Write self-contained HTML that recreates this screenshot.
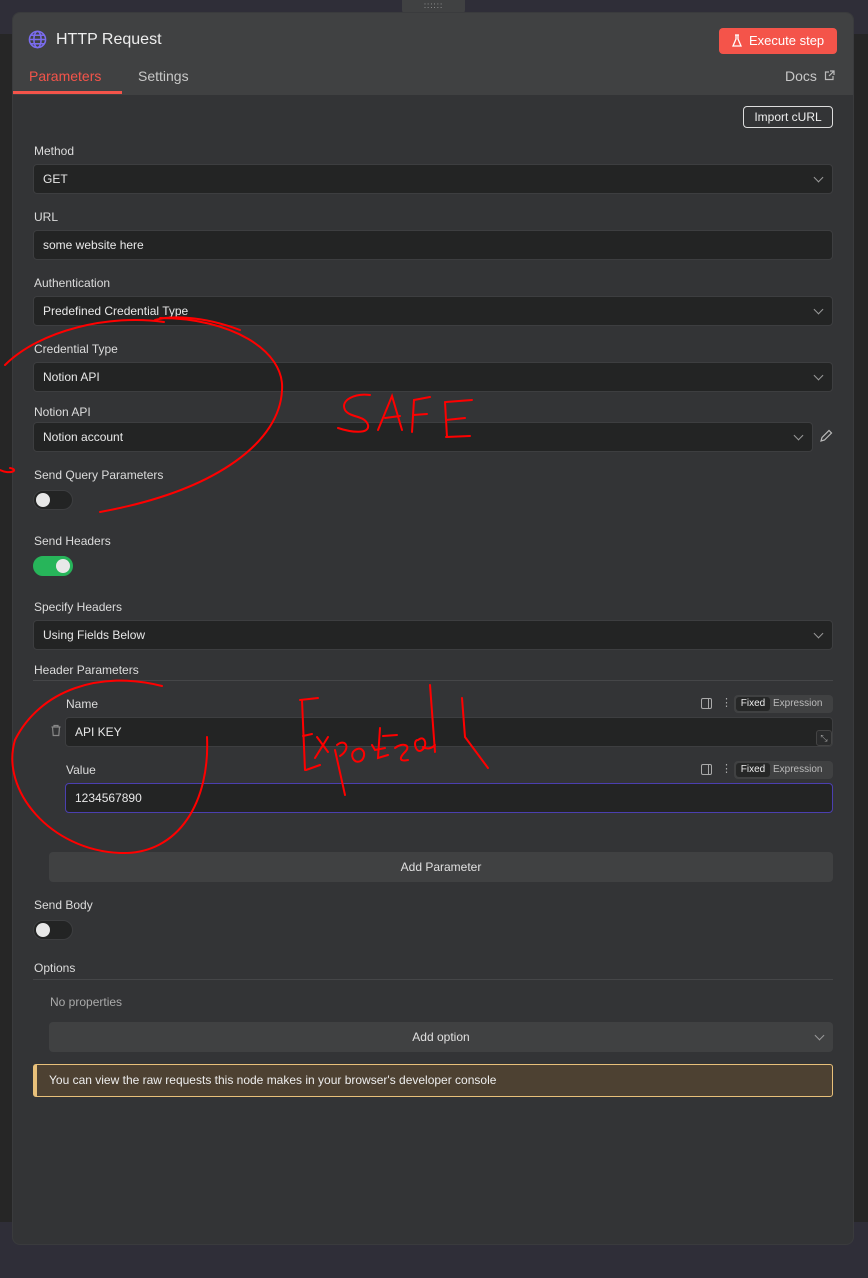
<!DOCTYPE html>
<html><head><meta charset="utf-8"><style>
*{box-sizing:border-box;margin:0;padding:0}
body{width:868px;height:1278px;overflow:hidden;background:#262626;font-family:"Liberation Sans",sans-serif;font-size:12px;color:#e4e4e4;position:relative}
.abs{position:absolute}
.lbl{position:absolute;left:34px;font-size:12px;color:#dcdcdc}
.inp{position:absolute;left:33px;width:800px;height:30px;background:#232424;border:1px solid #3d3e40;border-radius:4px;padding:0 9px;line-height:28px;font-size:12px;color:#e8e8e8}
.chev{position:absolute;right:10px;top:9px;width:7px;height:7px;border-right:1px solid #999;border-bottom:1px solid #999;transform:rotate(45deg)}
.tog{position:absolute;left:33px;width:40px;height:20px;border-radius:10px;background:#232424;border:1px solid #3d3e40}
.tog i{position:absolute;top:2px;left:2px;width:14px;height:14px;border-radius:50%;background:#e8e8e8}
.fx{position:absolute;right:35px;width:99px;height:18px;background:#404142;border-radius:4px;font-size:10px;color:#bbb}
</style></head><body>
<div class="abs" style="left:0;top:0;width:868px;height:34px;background:#2f2e38"></div>
<div class="abs" style="left:0;top:1222px;width:868px;height:56px;background:#2f2e38"></div>
<div class="abs" style="left:402px;top:0;width:63px;height:14px;background:#404142;border-radius:0 0 4px 4px;color:#aaa;font-size:8px;text-align:center;line-height:12px;letter-spacing:1px">::::::</div>
<div class="abs" style="left:12px;top:12px;width:842px;height:1233px;background:#333436;border-radius:8px;border:1px solid #3a3b3d;overflow:hidden">
 <div class="abs" style="left:0;top:0;width:842px;height:82px;background:#404142"></div>
</div>
<svg class="abs" style="left:28px;top:30px" width="19" height="19" viewBox="0 0 20 20" fill="none" stroke="#7b6cf0" stroke-width="1.6"><circle cx="10" cy="10" r="8.5"/><ellipse cx="10" cy="10" rx="3.8" ry="8.5"/><line x1="1.5" y1="10" x2="18.5" y2="10"/><line x1="3" y1="5.5" x2="17" y2="5.5"/><line x1="3" y1="14.5" x2="17" y2="14.5"/></svg>
<div class="abs" style="left:56px;top:31px;font-size:16px;color:#eee">HTTP Request</div>
<div class="abs" style="left:719px;top:28px;width:118px;height:26px;background:#f4544a;border-radius:4px;color:#fff;font-size:13px;line-height:26px;padding-left:30px">Execute step</div>
<svg class="abs" style="left:731px;top:34px" width="12" height="14" viewBox="0 0 12 14" fill="none" stroke="#fff" stroke-width="1.3"><path d="M4 1h4M5 1v4L2 12h8L7 5V1"/></svg>
<div class="abs" style="left:29px;top:68px;font-size:14px;color:#f4544a">Parameters</div>
<div class="abs" style="left:13px;top:91px;width:109px;height:3px;background:#f4544a"></div>
<div class="abs" style="left:138px;top:68px;font-size:14px;color:#c8c8c8">Settings</div>
<div class="abs" style="left:785px;top:68px;font-size:14px;color:#c8c8c8">Docs</div>
<svg class="abs" style="left:824px;top:70px" width="11" height="11" viewBox="0 0 11 11" fill="none" stroke="#bbb" stroke-width="1.2"><path d="M5 2H1.5v7.5H9V6M6 1h4v4M10 1L5 6"/></svg>
<div class="abs" style="left:743px;top:106px;width:90px;height:22px;border:1px solid #ddd;border-radius:4px;color:#eee;font-size:12px;text-align:center;line-height:20px">Import cURL</div>

<div class="lbl" style="top:144px">Method</div>
<div class="inp" style="top:164px">GET<span class="chev"></span></div>
<div class="lbl" style="top:210px">URL</div>
<div class="inp" style="top:230px">some website here</div>
<div class="lbl" style="top:276px">Authentication</div>
<div class="inp" style="top:296px">Predefined Credential Type<span class="chev"></span></div>
<div class="lbl" style="top:342px">Credential Type</div>
<div class="inp" style="top:362px">Notion API<span class="chev"></span></div>
<div class="lbl" style="top:405px">Notion API</div>
<div class="inp" style="top:422px;width:780px">Notion account<span class="chev"></span></div>
<svg class="abs" style="left:819px;top:429px" width="14" height="14" viewBox="0 0 14 14" fill="none" stroke="#bbb" stroke-width="1.2"><path d="M2 12l1-3.5 7-7 2.5 2.5-7 7z"/></svg>
<div class="lbl" style="top:468px">Send Query Parameters</div>
<div class="tog" style="top:490px"><i></i></div>
<div class="lbl" style="top:534px">Send Headers</div>
<div class="tog" style="top:556px;background:#27b55a;border-color:#27b55a"><i style="left:22px"></i></div>
<div class="lbl" style="top:600px">Specify Headers</div>
<div class="inp" style="top:620px">Using Fields Below<span class="chev"></span></div>
<div class="lbl" style="top:663px">Header Parameters</div>
<div class="abs" style="left:33px;top:680px;width:800px;height:1px;background:#454648"></div>

<div class="abs" style="left:66px;top:697px;color:#dcdcdc">Name</div>
<div class="abs" style="left:701px;top:698px;width:11px;height:11px;border:1px solid #aaa;border-radius:2px"><div style="position:absolute;left:6px;top:0;width:1px;height:9px;background:#aaa"></div></div>
<div class="abs" style="left:721px;top:696px;color:#aaa;font-size:11px">⋮</div>
<div class="fx" style="top:695px"><span style="position:absolute;left:2px;top:2px;width:34px;height:14px;background:#262727;border-radius:3px;color:#eee;text-align:center;line-height:14px">Fixed</span><span style="position:absolute;left:39px;top:2px;line-height:14px">Expression</span></div>
<svg class="abs" style="left:50px;top:724px" width="12" height="13" viewBox="0 0 12 13" fill="none" stroke="#888" stroke-width="1.2"><path d="M1.5 3h9M4 3V1.5h4V3M2.5 3l.7 8.5h5.6L9.5 3"/></svg>
<div class="inp" style="left:65px;top:717px;width:768px">API KEY</div>
<div class="abs" style="left:816px;top:730px;width:16px;height:16px;border:1px solid #444;border-radius:3px;background:#2a2b2c;color:#999;font-size:9px;text-align:center;line-height:14px">⤡</div>
<div class="abs" style="left:66px;top:763px;color:#dcdcdc">Value</div>
<div class="abs" style="left:701px;top:764px;width:11px;height:11px;border:1px solid #aaa;border-radius:2px"><div style="position:absolute;left:6px;top:0;width:1px;height:9px;background:#aaa"></div></div>
<div class="abs" style="left:721px;top:762px;color:#aaa;font-size:11px">⋮</div>
<div class="fx" style="top:761px"><span style="position:absolute;left:2px;top:2px;width:34px;height:14px;background:#262727;border-radius:3px;color:#eee;text-align:center;line-height:14px">Fixed</span><span style="position:absolute;left:39px;top:2px;line-height:14px">Expression</span></div>
<div class="inp" style="left:65px;top:783px;width:768px;border-color:#4b3fb0">1234567890</div>

<div class="abs" style="left:49px;top:852px;width:784px;height:30px;background:#404142;border-radius:4px;text-align:center;line-height:30px;color:#e0e0e0">Add Parameter</div>
<div class="lbl" style="top:898px">Send Body</div>
<div class="tog" style="top:920px"><i></i></div>
<div class="lbl" style="top:961px">Options</div>
<div class="abs" style="left:33px;top:979px;width:800px;height:1px;background:#454648"></div>
<div class="abs" style="left:50px;top:995px;color:#aaa">No properties</div>
<div class="abs" style="left:49px;top:1022px;width:784px;height:30px;background:#404142;border-radius:4px;text-align:center;line-height:30px;color:#e0e0e0">Add option<span class="chev" style="top:10px"></span></div>
<div class="abs" style="left:33px;top:1064px;width:800px;height:33px;background:#4d4132;border:1px solid #e8c07a;border-left:4px solid #e8c07a;border-radius:3px;padding-left:12px;line-height:31px;color:#eee">You can view the raw requests this node makes in your browser's developer console</div>

<svg class="abs" style="left:0;top:0" width="868" height="1278" fill="none" stroke="#f00" stroke-width="2" stroke-linecap="round">
<path d="M164 322C110 314 40 330 5 365M240 330C200 315 170 316 155 320M160 318C230 318 285 350 282 390C280 440 220 490 100 512M0 470C10 475 20 470 10 468"/>
<path d="M370 395C355 393 340 400 345 410C350 418 365 415 368 425C370 435 350 432 338 428M378 430L392 396L402 430M385 418L400 416M412 432L414 400L430 397M413 415L427 414M445 402L447 437M446 402L472 400M446 420L465 418M446 437L470 436"/>
<path d="M162 686C100 670 40 690 15 740C0 790 50 850 120 853C180 855 210 800 207 737"/>
<path d="M300 700L318 698M302 700L305 770M303 736L312 734M306 770L320 765M317 737L328 752M328 737L315 758M335 750L345 795M337 745C345 738 352 748 340 756M353 752C360 744 368 752 362 760C356 765 350 758 353 752M372 745L375 750L385 748M380 728L378 758L388 755M383 736L397 735M395 748C402 742 412 745 405 752C400 757 398 762 408 760M418 740C425 734 428 746 422 750C416 755 412 740 418 740M430 685L435 752M423 747C428 750 432 748 435 745M462 698L465 737L488 768"/>
</svg>
</body></html>
